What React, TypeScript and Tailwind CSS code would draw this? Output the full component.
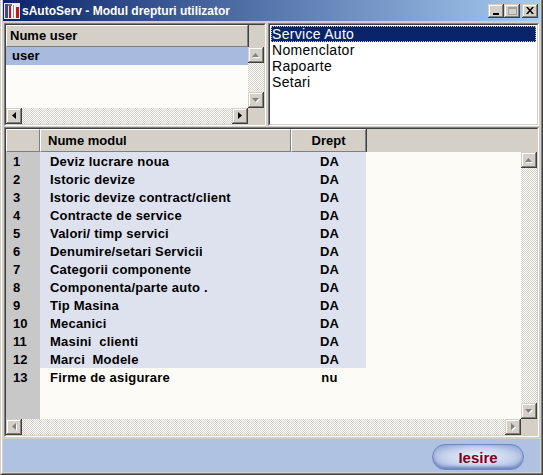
import React from 'react';

const FONT = "font-['Liberation_Sans',Arial,sans-serif]";

const RAISED =
  'bg-[#d4d0c8] shadow-[inset_-1px_-1px_#404040,inset_1px_1px_#d4d0c8,inset_-2px_-2px_#808080,inset_2px_2px_#ffffff]';

const TRACK = 'bg-[repeating-conic-gradient(#d4d0c8_0_25%,#ffffff_0_50%)] bg-[length:2px_2px]';

type Dir = 'up' | 'down' | 'left' | 'right';

const Arrow: React.FC<{ dir: Dir; disabled?: boolean }> = ({ dir, disabled }) => {
  const pts: Record<Dir, string> = {
    up: '3.5,0 7,4 0,4',
    down: '0,0 7,0 3.5,4',
    left: '4,0 4,7 0,3.5',
    right: '0,0 0,7 4,3.5',
  };
  const w = dir === 'up' || dir === 'down' ? 7 : 4;
  const h = dir === 'up' || dir === 'down' ? 4 : 7;
  return (
    <svg width={w + 1} height={h + 1} viewBox={`0 0 ${w + 1} ${h + 1}`}>
      {disabled && <polygon points={pts[dir]} fill="#ffffff" transform="translate(1,1)" />}
      <polygon points={pts[dir]} fill={disabled ? '#808080' : '#000000'} />
    </svg>
  );
};

const ScrollBtn: React.FC<{ dir: Dir; disabled?: boolean }> = ({ dir, disabled }) => (
  <div className={`w-4 h-4 shrink-0 flex items-center justify-center ${RAISED}`}>
    <Arrow dir={dir} disabled={disabled} />
  </div>
);

const VScroll: React.FC<{ disabled?: boolean }> = ({ disabled }) => (
  <div className="w-4 flex flex-col h-full">
    <ScrollBtn dir="up" disabled={disabled} />
    <div className={`flex-1 ${TRACK}`} />
    <ScrollBtn dir="down" disabled={disabled} />
  </div>
);

const HScroll: React.FC<{ disabled?: boolean }> = ({ disabled }) => (
  <div className="h-4 flex flex-row w-full">
    <ScrollBtn dir="left" disabled={disabled} />
    <div className={`flex-1 ${TRACK}`} />
    <ScrollBtn dir="right" disabled={disabled} />
  </div>
);

const Sunken: React.FC<{ className?: string; children: React.ReactNode }> = ({ className, children }) => (
  <div className={`border border-t-[#808080] border-l-[#808080] border-b-white border-r-white ${className ?? ''}`}>
    <div className="h-full w-full border border-t-[#404040] border-l-[#404040] border-b-[#d4d0c8] border-r-[#d4d0c8] flex flex-col overflow-hidden">
      {children}
    </div>
  </div>
);

const HeaderCell: React.FC<{ className?: string; children?: React.ReactNode }> = ({ className, children }) => (
  <div
    className={`h-full flex items-center bg-[#d4d0c8] border-t border-l border-t-white border-l-white border-r border-b border-r-[#808080] border-b-[#808080] shadow-[1px_0_#404040] text-[13px] font-bold text-black ${className ?? ''}`}
  >
    {children}
  </div>
);

const modules: [string, string][] = [
  ['Deviz lucrare noua', 'DA'],
  ['Istoric devize', 'DA'],
  ['Istoric devize contract/client', 'DA'],
  ['Contracte de service', 'DA'],
  ['Valori/ timp servici', 'DA'],
  ['Denumire/setari Servicii', 'DA'],
  ['Categorii componente', 'DA'],
  ['Componenta/parte auto .', 'DA'],
  ['Tip Masina', 'DA'],
  ['Mecanici', 'DA'],
  ['Masini  clienti', 'DA'],
  ['Marci  Modele', 'DA'],
  ['Firme de asigurare', 'nu'],
];

const AppIcon = () => (
  <svg width="16" height="16" viewBox="0 0 16 16">
    <rect x="0" y="0" width="16" height="16" fill="#e8e8f0" />
    <rect x="1" y="1" width="3" height="14" fill="#3a4a8a" />
    <rect x="5" y="3" width="2" height="12" fill="#c01818" />
    <rect x="8" y="1" width="3" height="14" fill="#ffffff" />
    <rect x="9" y="2" width="1" height="13" fill="#909090" />
    <rect x="12" y="4" width="3" height="11" fill="#c01818" />
    <rect x="4" y="1" width="4" height="2" fill="#707070" />
  </svg>
);

export default function App() {
  return (
    <div
      className={`w-[543px] h-[475px] bg-[#d4d0c8] flex flex-col border-l border-l-[#d4d0c8] border-r border-r-[#404040] border-b border-b-[#404040] ${FONT}`}
    >
      <div className="flex-1 flex flex-col border-l border-l-white border-r border-r-[#808080] border-b border-b-[#808080] px-[1px] pb-[1px]">
        {/* title bar */}
        <div className="h-[21px] shrink-0 flex items-center pl-[1px] pr-[2px] bg-[linear-gradient(to_right,#0a246a,#a6caf0)]">
          <AppIcon />
          <span className="ml-[2px] text-[12px] font-bold text-white leading-none">sAutoServ - Modul drepturi utilizator</span>
          <div className="ml-auto flex items-center">
            <div className={`w-4 h-[14px] flex items-end justify-center pb-[3px] ${RAISED}`}>
              <div className="w-[6px] h-[2px] bg-black" />
            </div>
            <div className={`w-4 h-[14px] flex items-center justify-center ${RAISED}`}>
              <div className="w-[9px] h-[8px] border border-[#a0a0a0] border-t-2" />
            </div>
            <div className={`ml-[2px] w-4 h-[14px] flex items-center justify-center ${RAISED}`}>
              <svg width="8" height="7" viewBox="0 0 8 7">
                <path d="M0 0h2l2 2.5L6 0h2L5 3.5 8 7H6L4 4.5 2 7H0l3-3.5z" fill="#000" />
              </svg>
            </div>
          </div>
        </div>

        <div className="flex-1 flex flex-col px-[1px] pt-[2px] gap-[1px]">
          {/* top panel */}
          <div className="h-[103px] shrink-0 flex gap-[2px]">
            <Sunken className="w-[262px] h-full">
              <div className="flex h-[22px] shrink-0">
                <HeaderCell className="flex-1 pl-[3px]">Nume user</HeaderCell>
                <div className="w-4" />
              </div>
              <div className="flex flex-1 min-h-0">
                <div className="flex-1 bg-[#fefcf8]">
                  <div className="h-[18px] bg-[#a9badf] flex items-center pl-[6px] text-[13px] font-bold text-black">user</div>
                </div>
                <VScroll disabled />
              </div>
              <div className="flex h-4 shrink-0">
                <div className="flex-1">
                  <HScroll />
                </div>
                <div className="w-4" />
              </div>
            </Sunken>

            <Sunken className="flex-1 h-full">
              <div className="flex-1 bg-white pt-[1px] px-[1px] text-[14px] tracking-[0.3px] leading-[16px] text-black">
                <div className="bg-[#0a246a] text-white outline outline-1 outline-dotted outline-[#c0c0c0] -outline-offset-1 pl-[1px]">
                  Service Auto
                </div>
                <div className="pl-[1px]">Nomenclator</div>
                <div className="pl-[1px]">Rapoarte</div>
                <div className="pl-[1px]">Setari</div>
              </div>
            </Sunken>
          </div>

          {/* modules grid */}
          <Sunken className="h-[310px] shrink-0">
            <div className="flex h-[23px] shrink-0">
              <HeaderCell className="w-[34px]" />
              <HeaderCell className="w-[251px] pl-[7px]">Nume modul</HeaderCell>
              <HeaderCell className="w-[75px] justify-center">Drept</HeaderCell>
              <div className="flex-1" />
            </div>
            <div className="flex flex-1 min-h-0">
              <div className="flex-1 flex bg-[#fdfbf6]">
                <div className="w-[34px] bg-[#c8c8c8] h-full">
                  {modules.map((_, i) => (
                    <div key={i} className="h-[18px] flex items-center pt-[1px] pl-[7px] text-[13px] font-bold text-black">
                      {i + 1}
                    </div>
                  ))}
                </div>
                <div className="w-[326px]">
                  {modules.map(([name, right], i) => (
                    <div
                      key={name}
                      className={`h-[18px] flex items-center pt-[1px] text-[13px] font-bold tracking-[0.2px] text-black ${
                        i < 12 ? 'bg-[#dee2ef]' : ''
                      }`}
                    >
                      <span className="w-[251px] pl-[10px] whitespace-pre">{name}</span>
                      <span className="w-[75px] text-center pl-[2px]">{right}</span>
                    </div>
                  ))}
                </div>
              </div>
              <VScroll disabled />
            </div>
            <div className="flex h-4 shrink-0">
              <div className="flex-1">
                <HScroll disabled />
              </div>
              <div className="w-4" />
            </div>
          </Sunken>

          {/* bottom bar */}
          <div className="flex-1 bg-[#b0c2e2] flex items-start justify-end pt-[5px] pr-[16px] -mx-[1px] border-t border-t-[#d4d0c8]">
            <button className="w-[92px] h-[26px] rounded-full border border-[#7088c0] bg-[radial-gradient(ellipse_at_center,#f2f5fc_0%,#c4d1ec_55%,#8299cf_100%)] shadow-[inset_0_-2px_3px_#6f86bf] text-[15px] font-bold text-[#800020] leading-none">
              Iesire
            </button>
          </div>
        </div>
      </div>
    </div>
  );
}
